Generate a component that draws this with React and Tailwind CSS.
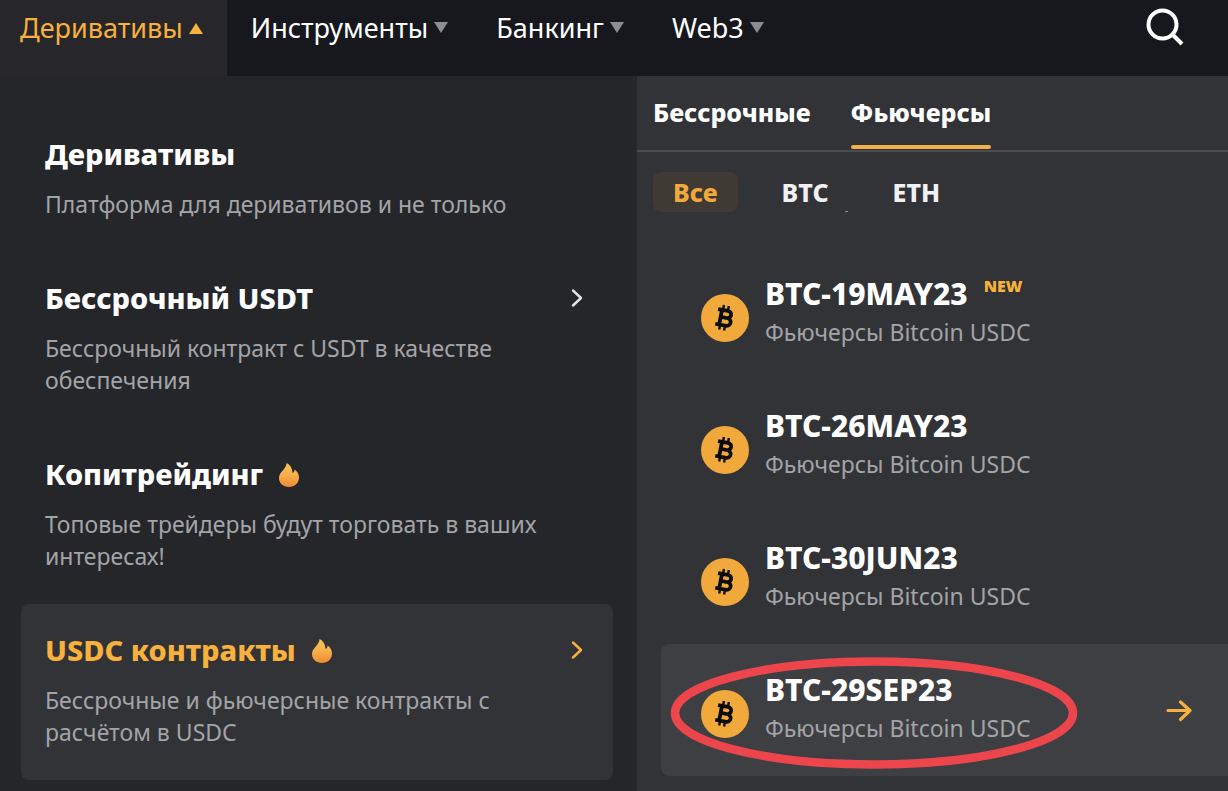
import { useState } from "react";

const NAV = ["Инструменты", "Банкинг", "Web3"];

const PRODUCTS = [
    { title: "Деривативы", text: "Платформа для деривативов и не только" },
    { title: "Бессрочный USDT", text: "Бессрочный контракт с USDT в качестве обеспечения", arrow: true },
    { title: "Копитрейдинг", text: "Топовые трейдеры будут торговать в ваших интересах!", hot: true },
    { title: "USDC контракты", text: "Бессрочные и фьючерсные контракты с расчётом в USDC", hot: true, arrow: true, active: true },
];

const FUTURES = [
    { name: "BTC-19MAY23", isNew: true },
    { name: "BTC-26MAY23" },
    { name: "BTC-30JUN23" },
    { name: "BTC-29SEP23", active: true },
];

function Flame({ id }) {
    return (
        <svg viewBox="0 0 20 24" className="mt-0.5 h-6 w-5 shrink-0">
            <defs>
                <linearGradient id={id} x1="0" y1="0" x2="0" y2="1">
                    <stop offset="0" stopColor="#f6c552" />
                    <stop offset="0.5" stopColor="#f8b04c" />
                    <stop offset="1" stopColor="#ee8a30" />
                </linearGradient>
            </defs>
            <path
                fill={`url(#${id})`}
                d="M7.600 0C11 1.800 13.200 5 13.600 10C14.800 9.300 15.500 8.300 15.700 6.500C18.500 8.600 20 11.300 20 14.500C20 20 15.800 24 10 24C4.200 24 0 20.200 0 15C0 11.800 1.800 9.600 4 7.200C6 4.900 7.400 3 7.600 0Z"
            />
        </svg>
    );
}

function Chevron({ className }) {
    return (
        <svg viewBox="0 0 12 20" fill="none" stroke="currentColor" strokeWidth="2.4" strokeLinecap="round" strokeLinejoin="round" className={`h-5 w-3 shrink-0 ${className}`}>
            <path d="M2 2.500L10 10L2 17.500" />
        </svg>
    );
}

function BitcoinIcon() {
    return (
        <svg viewBox="0 0 48 48" className="mt-[18px] size-12 shrink-0">
            <circle cx="24" cy="24" r="24" fill="#f2a93b" />
            <g transform="rotate(11 24 24)" fill="none" stroke="#0b0b0b">
                <path strokeWidth="3.800" strokeLinejoin="round" d="M19.500 16.500V31.500M15.500 16.500H25.500C30.800 16.500 30.800 23.700 25.500 23.700H20M25.500 23.700C32 23.700 32 31.500 25.500 31.500H15.500" />
                <path strokeWidth="2.400" d="M20.500 11.500V16M25.500 11.500V16M20.500 32V36.500M25.500 32V36.500" />
            </g>
        </svg>
    );
}

function Header() {
    return (
        <header className="flex items-start justify-between bg-[#17181d]">
            <nav className="flex text-[27px] leading-10 text-white">
                <a href="#derivatives" className="flex items-center gap-1.5 bg-[#26262b] pt-2 pr-6 pb-7 pl-5 text-[#f7b13c]">
                    Деривативы
                    <svg viewBox="0 0 14 12" className="h-3 w-3.5" fill="currentColor"><path d="M7 1L14 12H0Z" /></svg>
                </a>
                {NAV.map(item => (
                    <a key={item} href="#menu" className="flex items-center gap-1.5 px-6 pt-2 pb-7">
                        {item}
                        <svg viewBox="0 0 14 12" className="h-3 w-3.5 text-[#8c8d91]" fill="currentColor"><path d="M0 0H14L7 11Z" /></svg>
                    </a>
                ))}
            </nav>
            <button aria-label="Поиск" className="mt-2 mr-11">
                <svg viewBox="0 0 38 38" fill="none" stroke="#fff" strokeWidth="4" className="size-[38px]">
                    <circle cx="16.500" cy="16.500" r="14" />
                    <path d="M26.500 26.500L36 36" />
                </svg>
            </button>
        </header>
    );
}

function Product({ item, index }) {
    return (
        <a href="#product" className={`block rounded-lg py-8 pr-[30px] pl-6 ${item.active ? "bg-[#323337]" : ""}`}>
            <div className="flex items-center justify-between">
                <h2 className={`flex items-center gap-4 text-[29px] leading-7 font-extrabold ${item.active ? "text-[#f7b13c]" : "text-white"}`}>
                    {item.title}
                    {item.hot && <Flame id={`flame-${index}`} />}
                </h2>
                {item.arrow && <Chevron className={item.active ? "text-[#f7b13c]" : "text-[#e4e4e6]"} />}
            </div>
            <p className="mt-5 pr-8 text-[23px] leading-8 text-[#a3a4a8]">{item.text}</p>
        </a>
    );
}

function Future({ item }) {
    return (
        <li>
            <a href="#future" className={`relative flex gap-4 rounded-l-lg pt-7 pr-9 pb-8 pl-10 ${item.active ? "bg-[#3e3f43]" : ""}`}>
                <BitcoinIcon />
                <div className="grow">
                    <h3 className="flex gap-4 text-[30px] leading-9 font-extrabold text-white">
                        {item.name}
                        {item.isNew && <span className="text-base leading-5 font-black text-[#f7b13c]">NEW</span>}
                    </h3>
                    <p className="mt-1 text-[23px] leading-8 text-[#a3a4a8]">Фьючерсы Bitcoin USDC</p>
                </div>
                {item.active && (
                    <>
                        <svg viewBox="0 0 26 22" fill="none" stroke="#f7b13c" strokeWidth="3.200" strokeLinecap="round" strokeLinejoin="round" className="mt-7 h-[22px] w-[26px] shrink-0">
                            <path d="M2 10.500H24M14.500 2L24 10.500L14.500 19.500" />
                        </svg>
                        <svg viewBox="0 0 408 112" fill="none" stroke="#ec464c" strokeWidth="8.500" className="pointer-events-none absolute top-[13px] left-[9px] h-28 w-[408px]">
                            <ellipse cx="204" cy="56" rx="199" ry="51.500" />
                        </svg>
                    </>
                )}
            </a>
        </li>
    );
}

export default function App() {
    const [tab, setTab] = useState("Фьючерсы");
    const [coin, setCoin] = useState("Все");

    return (
        <div className="flex min-h-screen flex-col bg-[#25262a] font-['Noto_Sans',sans-serif]">
            <Header />
            <main className="grid grow grid-cols-[637fr_591fr]">
                <section className="pt-8 pr-6 pb-2 pl-[21px]">
                    {PRODUCTS.map((item, index) => (
                        <Product key={item.title} item={item} index={index} />
                    ))}
                </section>

                <section className="bg-[#323337]">
                    <div className="flex gap-10 border-b-2 border-[#4b4c50] px-4">
                        {["Бессрочные", "Фьючерсы"].map(name => (
                            <button
                                key={name}
                                onClick={() => setTab(name)}
                                className={`relative pt-4 pb-[18px] text-[25px] leading-10 font-extrabold text-white ${tab === name ? "after:absolute after:inset-x-0 after:bottom-px after:h-1 after:rounded-full after:bg-[#f0b04a]" : ""}`}
                            >
                                {name}
                            </button>
                        ))}
                    </div>
                    <div className="relative flex gap-6 px-4 pt-5">
                        {["Все", "BTC", "ETH"].map(name => (
                            <button
                                key={name}
                                onClick={() => setCoin(name)}
                                className={`rounded-lg px-5 text-[25px] leading-10 font-extrabold ${coin === name ? "bg-[#3f3a33] text-[#f2a93b]" : "text-[#f1f1f3]"}`}
                            >
                                {name}
                            </button>
                        ))}
                        <span className="absolute bottom-0 left-52 h-px w-[3px] bg-[#8c8d91]"></span>
                    </div>
                    <ul className="pt-9 pl-6">
                        {FUTURES.map(item => (
                            <Future key={item.name} item={item} />
                        ))}
                    </ul>
                </section>
            </main>
        </div>
    );
}
